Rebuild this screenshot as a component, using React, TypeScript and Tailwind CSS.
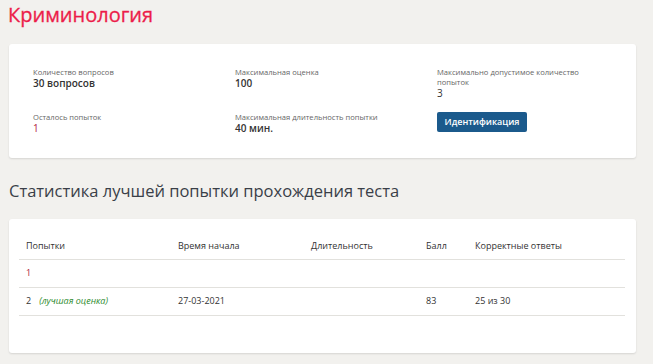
const font = { fontFamily: '"Open Sans", "Noto Sans", sans-serif' };

function Info({ label, value }: { label: string; value: string }) {
    return (
        <div className="flex flex-col">
            <span className="text-[7.6px] leading-[10px] text-[#666]">{label}</span>
            <span className="text-[10px] leading-[12px] font-semibold text-[#333]">{value}</span>
        </div>
    );
}

const attempts = [
    { n: "1", best: false, start: "", dur: "", score: "", correct: "" },
    { n: "2", best: true, start: "27-03-2021", dur: "", score: "83", correct: "25 из 30" },
];

export default function App() {
    return (
        <div className="min-h-[364px] w-[653px] bg-[#f2f1ee] pt-[1px] pb-3 antialiased" style={font}>
            <h1 className="ml-[8px] mt-[0px] text-[20px] leading-[28px] font-normal text-[#ec1d4a] [-webkit-text-stroke:0.3px_#ec1d4a]">
                Криминология
            </h1>

            <div className="mx-[9px] mt-[15px] w-[627px] h-[114px] bg-white rounded-[3px] shadow-[0_1px_2px_rgba(0,0,0,0.12)] pl-[24px] pt-[23px]">
                <div className="grid grid-cols-[202px_202px_1fr] gap-y-[13px]">
                    <Info label="Количество вопросов" value="30 вопросов" />
                    <Info label="Максимальная оценка" value="100" />
                    <div className="flex flex-col w-[150px]">
                        <span className="text-[7.6px] leading-[10px] text-[#666]">
                            Максимально допустимое количество попыток
                        </span>
                        <span className="text-[10px] leading-[12px] text-[#333]">3</span>
                    </div>
                    <div className="flex flex-col">
                        <span className="text-[7.6px] leading-[10px] text-[#666]">Осталось попыток</span>
                        <span className="text-[10px] leading-[12px] text-[#b0243a]">1</span>
                    </div>
                    <Info label="Максимальная длительность попытки" value="40 мин." />
                    <div className="flex items-start">
                        <button
                            type="button"
                            className="h-[20px] w-[90px] rounded-[2px] bg-[#1b5a8c] text-white text-[9px] leading-[20px] font-semibold"
                        >
                            Идентификация
                        </button>
                    </div>
                </div>
            </div>

            <h2 className="ml-[9px] mt-[21px] text-[16.5px] leading-[24px] font-normal text-[#3a3f48]">
                Статистика лучшей попытки прохождения теста
            </h2>

            <div className="mx-[9px] mt-[16px] w-[627px] bg-white rounded-[3px] shadow-[0_1px_2px_rgba(0,0,0,0.12)] px-[10px] pt-[13px] pb-[37px]">
                <table className="w-[606px] border-collapse text-[9px] text-[#333]">
                    <thead>
                        <tr className="h-[27px] border-b border-[#e2e1dd] text-left">
                            <th className="w-[159px] pl-[7px] font-normal">Попытки</th>
                            <th className="w-[133px] font-normal">Время начала</th>
                            <th className="w-[115px] font-normal">Длительность</th>
                            <th className="w-[49px] font-normal">Балл</th>
                            <th className="font-normal">Корректные ответы</th>
                        </tr>
                    </thead>
                    <tbody>
                        {attempts.map((a) => (
                            <tr key={a.n} className="h-[28px] border-b border-[#e2e1dd]">
                                <td className="pl-[7px]">
                                    <span className={a.best ? "text-[#333]" : "text-[#b0243a]"}>{a.n}</span>
                                    {a.best && (
                                        <span className="ml-[8px] text-[9px] italic text-[#2e8b2e]">(лучшая оценка)</span>
                                    )}
                                </td>
                                <td>{a.start}</td>
                                <td>{a.dur}</td>
                                <td>{a.score}</td>
                                <td>{a.correct}</td>
                            </tr>
                        ))}
                    </tbody>
                </table>
            </div>
        </div>
    );
}
